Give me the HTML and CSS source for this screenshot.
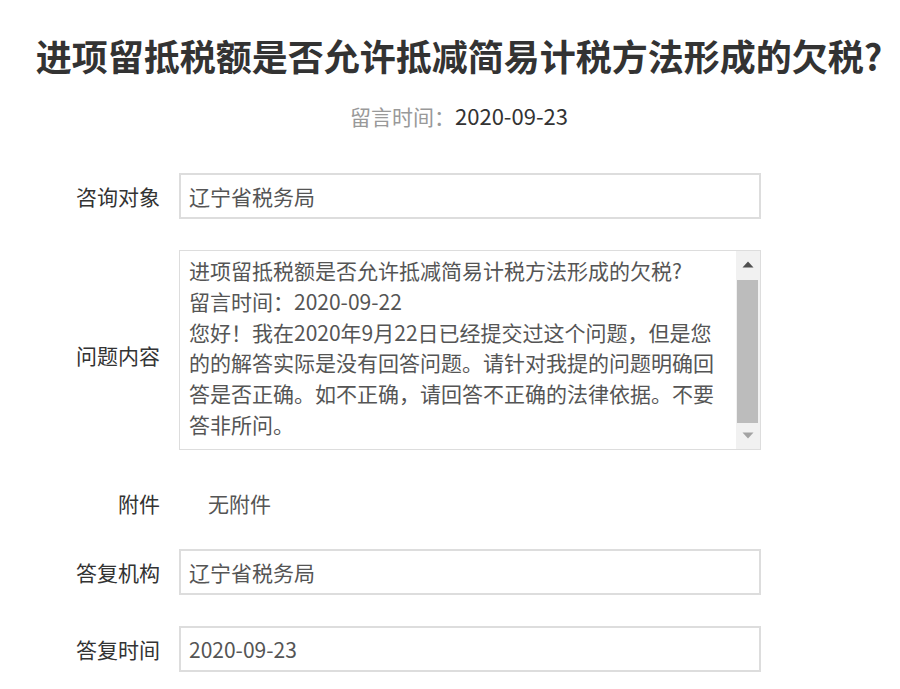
FILE: index.html
```html
<!DOCTYPE html>
<html lang="zh-CN">
<head>
<meta charset="utf-8">
<title>进项留抵税额是否允许抵减简易计税方法形成的欠税?</title>
<link rel="stylesheet" href="styles.css">
</head>
<body>
<div class="page">
  <h1 class="title">进项留抵税额是否允许抵减简易计税方法形成的欠税?</h1>
  <div class="meta"><span class="meta-label">留言时间：</span><span class="meta-value">2020-09-23</span></div>
  <div class="form">
    <div class="row row-first">
      <div class="label">咨询对象</div>
      <div class="field">辽宁省税务局</div>
    </div>
    <div class="row row-area">
      <div class="label">问题内容</div>
      <div class="area">
        <div class="area-text">进项留抵税额是否允许抵减简易计税方法形成的欠税?
留言时间：2020-09-22
您好！我在2020年9月22日已经提交过这个问题，但是您的的解答实际是没有回答问题。请针对我提的问题明确回答是否正确。如不正确，请回答不正确的法律依据。不要答非所问。</div>
        <div class="scrollbar">
          <div class="sb-btn">
            <svg width="12" height="7" viewBox="0 0 12 7"><polygon points="0.5,6.5 6,0.5 11.5,6.5" fill="#505050"/></svg>
          </div>
          <div class="sb-track"><div class="sb-thumb"></div></div>
          <div class="sb-btn sb-btn-down">
            <svg width="12" height="7" viewBox="0 0 12 7"><polygon points="0.5,0.5 11.5,0.5 6,6.5" fill="#a3a3a3"/></svg>
          </div>
        </div>
      </div>
    </div>
    <div class="row row-attach">
      <div class="label">附件</div>
      <div class="plain">无附件</div>
    </div>
    <div class="row row-org">
      <div class="label">答复机构</div>
      <div class="field">辽宁省税务局</div>
    </div>
    <div class="row row-time">
      <div class="label">答复时间</div>
      <div class="field">2020-09-23</div>
    </div>
  </div>
</div>
</body>
</html>
```
FILE: styles.css
```css
html, body {
  margin: 0;
  padding: 0;
  background: #fff;
}
body {
  font-family: "Noto Sans CJK SC", "Microsoft YaHei", sans-serif;
  color: #333;
}
.page {
  width: 900px;
  padding-top: 31px;
}
.title {
  margin: 0;
  padding-left: 18px;
  font-size: 36px;
  line-height: 48px;
  font-weight: 700;
  text-align: center;
  color: #333;
  white-space: nowrap;
}
.meta {
  margin-top: 21px;
  padding-left: 18px;
  font-size: 21px;
  line-height: 30px;
  text-align: center;
}
.meta-label {
  color: #999;
}
.meta-value {
  color: #333;
  font-size: 22px;
}
.form {
  margin-top: 42px;
}
.row {
  display: flex;
  align-items: center;
}
.row-area {
  margin-top: 31px;
}
.row-attach {
  margin-top: 30px;
  height: 46px;
}
.row-org {
  margin-top: 23px;
}
.row-time {
  margin-top: 31px;
}
.label {
  width: 160px;
  flex: none;
  text-align: right;
  font-size: 21px;
  line-height: 30px;
  color: #333;
  margin-right: 19px;
}
.row-area .label {
  margin-top: 10px;
}
.field {
  box-sizing: border-box;
  width: 582px;
  height: 46px;
  border: 2px solid #ddd;
  padding: 0 8px;
  font-size: 21px;
  line-height: 42px;
  color: #555;
}
.plain {
  padding-left: 29px;
  font-size: 21px;
  line-height: 30px;
  color: #555;
}
.area {
  box-sizing: border-box;
  width: 582px;
  height: 200px;
  border: 1px solid #ddd;
  display: flex;
  background: #fff;
}
.area-text {
  flex: 1;
  min-width: 0;
  padding: 4px 12px 0 9px;
  overflow: hidden;
  white-space: pre-wrap;
  font-size: 21px;
  line-height: 30.8px;
  color: #555;
}
.scrollbar {
  width: 24px;
  flex: none;
  display: flex;
  flex-direction: column;
  background: #f1f1f1;
}
.sb-btn {
  height: 26px;
  flex: none;
  display: flex;
  justify-content: center;
  padding-top: 10px;
  box-sizing: border-box;
}
.sb-btn svg {
  display: block;
}
.sb-btn-down {
  padding-top: 9px;
}
.sb-track {
  flex: 1;
  padding: 3px 2px 0 1px;
  display: flex;
}
.sb-thumb {
  flex: 1;
  background: #bcbcbc;
}
```
